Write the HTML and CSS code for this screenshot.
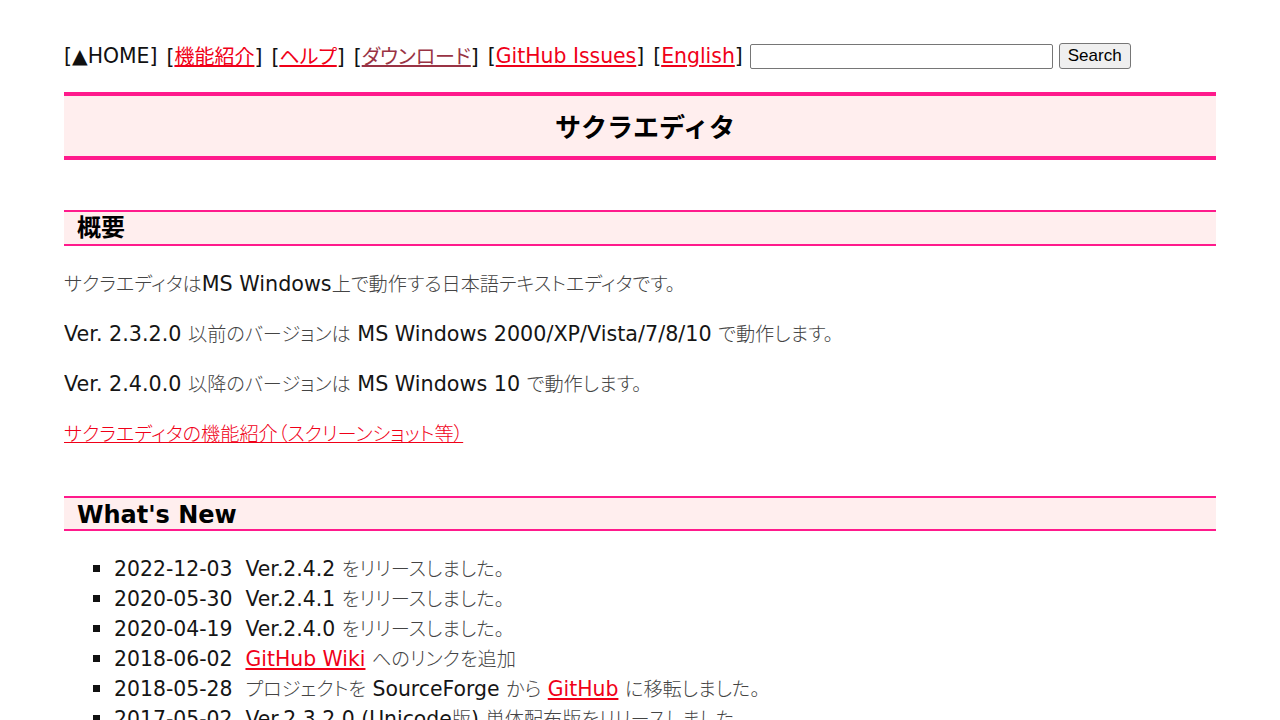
FILE: index.html
```html
<!DOCTYPE html>
<html lang="ja">
<head>
<meta charset="utf-8">
<title>サクラエディタ</title>
<link rel="stylesheet" href="styles.css">
</head>
<body>
<div class="nav">
  <span class="en">[▲HOME]</span>
  <span><span class="en">[</span><a href="#">機能紹介</a><span class="en">]</span></span>
  <span><span class="en">[</span><a href="#">ヘルプ</a><span class="en">]</span></span>
  <span><span class="en">[</span><a href="#" class="visited">ダウンロード</a><span class="en">]</span></span>
  <span class="en">[<a href="#">GitHub Issues</a>]</span>
  <span class="en">[<a href="#">English</a>]</span>
  <form class="search">
    <input type="text" class="search-box">
    <button type="button" class="search-btn">Search</button>
  </form>
</div>

<h1 class="title">サクラエディタ</h1>

<h2 class="section">概要</h2>
<p class="first">サクラエディタは<span class="en">MS Windows</span>上で動作する日本語テキストエディタです。</p>
<p><span class="en">Ver. 2.3.2.0 </span>以前のバージョンは<span class="en"> MS Windows 2000/XP/Vista/7/8/10 </span>で動作します。</p>
<p><span class="en">Ver. 2.4.0.0 </span>以降のバージョンは<span class="en"> MS Windows 10 </span>で動作します。</p>
<p><a href="#">サクラエディタの機能紹介（スクリーンショット等）</a></p>

<h2 class="section news">What's New</h2>
<ul class="news-list">
  <li><span class="en">2022-12-03&nbsp; Ver.2.4.2 </span>をリリースしました。</li>
  <li><span class="en">2020-05-30&nbsp; Ver.2.4.1 </span>をリリースしました。</li>
  <li><span class="en">2020-04-19&nbsp; Ver.2.4.0 </span>をリリースしました。</li>
  <li><span class="en">2018-06-02&nbsp; <a href="#">GitHub Wiki</a> </span>へのリンクを追加</li>
  <li><span class="en">2018-05-28&nbsp; </span>プロジェクトを<span class="en"> SourceForge </span>から<span class="en"> <a href="#">GitHub</a> </span>に移転しました。</li>
  <li><span class="en">2017-05-02&nbsp; Ver.2.3.2.0 (Unicode</span>版<span class="en">) </span>単体配布版をリリースしました。</li>
</ul>
</body>
</html>
```

FILE: styles.css
```css
html {
  background: #fff;
}

body {
  margin: 0 5%;
  font-family: "Noto Sans CJK JP", "DejaVu Sans", sans-serif;
  font-size: 19.2px;
  font-feature-settings: "palt";
  font-weight: 300;
  color: #444;
}

/* Latin runs are set in a wider face than the Japanese text */
.en {
  font-family: "DejaVu Sans", "Noto Sans CJK JP", sans-serif;
  font-size: 20.4px;
  font-weight: 400;
  line-height: 0;
  color: #151515;
}

p .en {
  font-size: 20.7px;
}

a {
  color: #f00018;
}

a.visited {
  color: #993344;
}

.nav {
  padding-top: 41px;
  height: 30px;
  line-height: 30px;
  display: flex;
  align-items: center;
  gap: 9px;
  white-space: nowrap;
  color: #111;
  font-size: 20px;
  font-weight: 400;
}

.nav .en {
  font-size: 20.4px;
  line-height: 30px;
  color: #111;
}

.search {
  display: flex;
  align-items: center;
  gap: 6px;
  margin: 0 0 0 -2px;
}

.search-box {
  width: 297px;
  height: 19px;
  border: 1px solid #767676;
  border-radius: 2px;
  padding: 2px;
  font-size: 14px;
}

.search-btn {
  height: 26px;
  padding: 0 8px;
  font-family: "Liberation Sans", Arial, sans-serif;
  font-size: 17px;
  color: #000;
  background: #efefef;
  border: 1px solid #767676;
  border-radius: 3px;
}

.title {
  margin: 21px 0 0;
  height: 60px;
  padding-left: 10px;
  line-height: 60px;
  background: #ffeeee;
  border-top: 4px solid #ff1a8c;
  border-bottom: 4px solid #ff1a8c;
  text-align: center;
  font-family: "Noto Sans CJK JP", sans-serif;
  font-feature-settings: normal;
  font-size: 26px;
  font-weight: bold;
  color: #000;
}

.section {
  margin: 50px 0 0;
  height: 32px;
  line-height: 32px;
  padding-left: 13px;
  background: #ffeeee;
  border-top: 2px solid #ff1a8c;
  border-bottom: 2px solid #ff1a8c;
  font-family: "DejaVu Sans", "Noto Sans CJK JP", sans-serif;
  font-feature-settings: normal;
  font-size: 24px;
  font-weight: bold;
  color: #000;
}

.section.news {
  margin-top: 48px;
  height: 31px;
  line-height: 34px;
}

p {
  margin: 20px 0;
  line-height: 30px;
}

p.first {
  margin-top: 22px;
}

.news-list {
  margin: 22px 0 0;
  padding-left: 50px;
  list-style: square;
  line-height: 30px;
}

.news-list li::marker {
  color: #111;
  font-size: 18px;
}
```
